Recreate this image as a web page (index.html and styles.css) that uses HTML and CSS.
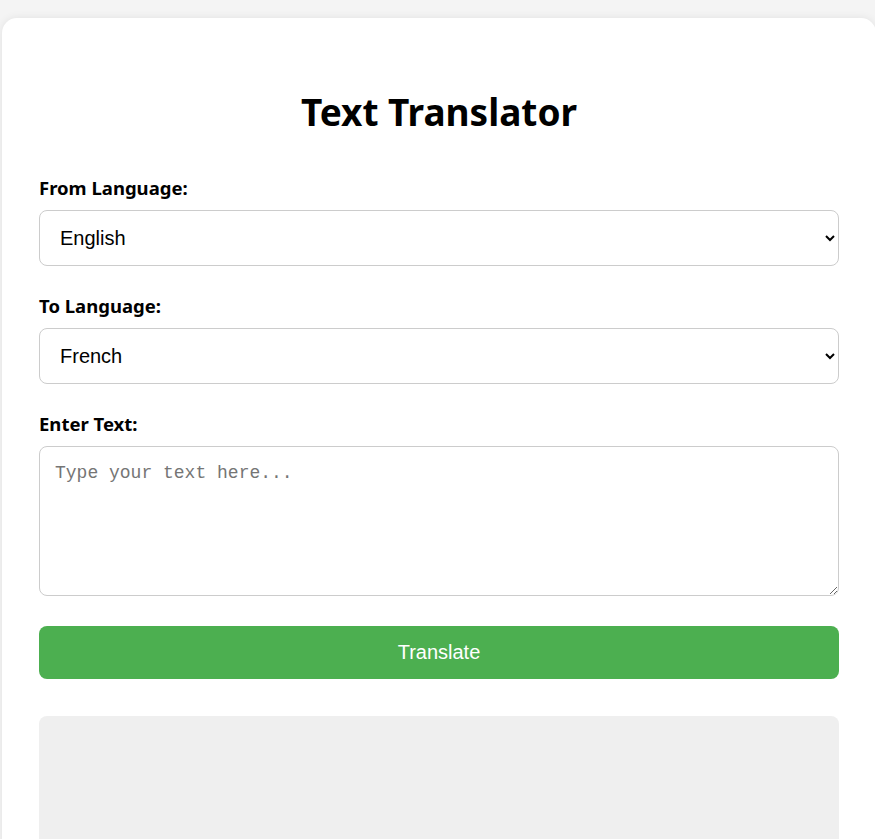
FILE: index.html
```html
<!DOCTYPE html>
<html lang="en">
<head>
<meta charset="utf-8">
<title>Text Translator</title>
<link rel="stylesheet" href="styles.css">
</head>
<body>
<div class="card">
  <h1 class="title">Text Translator</h1>
  <label class="label" for="from">From Language:</label>
  <select class="select" id="from">
    <option>English</option>
    <option>French</option>
  </select>
  <label class="label" for="to">To Language:</label>
  <select class="select" id="to">
    <option>French</option>
    <option>English</option>
  </select>
  <label class="label" for="text">Enter Text:</label>
  <textarea class="textarea" id="text" placeholder="Type your text here..."></textarea>
  <button class="button" type="button">Translate</button>
  <div class="result"></div>
</div>
</body>
</html>
```
FILE: styles.css
```css
html, body {
  margin: 0;
  padding: 0;
}
body {
  background: #f4f4f4;
  font-family: "Noto Sans", "Open Sans", sans-serif;
  color: #000;
  overflow: hidden;
}
.card {
  margin: 18px 0 0 2px;
  width: 800px;
  padding: 40px 37px 40px 37px;
  background: #fff;
  border-radius: 15px;
  box-shadow: 0 0 8px rgba(0, 0, 0, 0.08);
  display: flex;
  flex-direction: column;
}
.title {
  margin: 29px 0 39px;
  text-align: center;
  font-size: 37px;
  line-height: 50px;
  font-weight: 700;
}
.label {
  display: block;
  font-size: 18.5px;
  line-height: 24px;
  font-weight: 700;
  margin-bottom: 10px;
}
.select {
  box-sizing: border-box;
  width: 800px;
  height: 56px;
  padding: 0 16px;
  font-family: "Liberation Sans", Arial, sans-serif;
  font-size: 20px;
  border: 1px solid #ccc;
  border-radius: 8px;
  background: #fff;
  color: #000;
  margin-bottom: 28px;
}
.textarea {
  box-sizing: border-box;
  width: 800px;
  height: 150px;
  padding: 16px 15px;
  font-family: "Liberation Mono", "DejaVu Sans Mono", monospace;
  font-size: 18px;
  border: 1px solid #ccc;
  border-radius: 8px;
  margin: 0 0 30px;
  resize: vertical;
}
.textarea::placeholder {
  color: #757575;
}
.button {
  width: 800px;
  height: 53px;
  border: none;
  border-radius: 8px;
  background: #4caf50;
  color: #fff;
  font-family: "Liberation Sans", Arial, sans-serif;
  font-size: 20px;
  cursor: pointer;
  margin-bottom: 37px;
}
.result {
  height: 150px;
  background: #efefef;
  border-radius: 8px;
}
```
